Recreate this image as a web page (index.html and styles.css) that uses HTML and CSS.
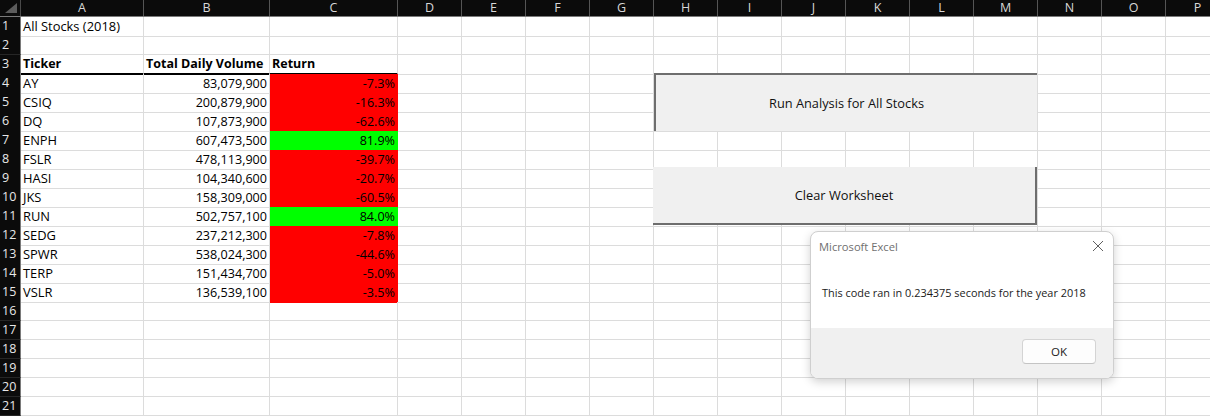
FILE: index.html
```html
<!DOCTYPE html>
<html>
<head>
<meta charset="utf-8">
<link rel="stylesheet" href="styles.css">
</head>
<body>
<div class="sheet">
  <div class="colhead">
    <div class="corner"><svg width="20" height="16" viewBox="0 0 20 16"><polygon points="17,3 17,13 5,13" fill="#5c5c5c"/></svg></div>
    <div class="ch">A</div><div class="ch">B</div><div class="ch">C</div><div class="ch">D</div><div class="ch">E</div><div class="ch">F</div><div class="ch">G</div><div class="ch">H</div><div class="ch">I</div><div class="ch">J</div><div class="ch">K</div><div class="ch">L</div><div class="ch">M</div><div class="ch">N</div><div class="ch">O</div><div class="ch">P</div>
  </div>
  <div class="row"><div class="rh">1</div><div class="cell">All Stocks (2018)</div><div class="cell"></div><div class="cell"></div><div class="rest"></div></div>
  <div class="row"><div class="rh">2</div><div class="cell"></div><div class="cell"></div><div class="cell"></div><div class="rest"></div></div>
  <div class="row head3"><div class="rh">3</div><div class="cell b">Ticker</div><div class="cell b">Total Daily Volume</div><div class="cell b">Return</div><div class="rest"></div></div>
  <div class="row"><div class="rh">4</div><div class="cell">AY</div><div class="cell num">83,079,900</div><div class="cell num neg">-7.3%</div><div class="rest"></div></div>
  <div class="row"><div class="rh">5</div><div class="cell">CSIQ</div><div class="cell num">200,879,900</div><div class="cell num neg">-16.3%</div><div class="rest"></div></div>
  <div class="row"><div class="rh">6</div><div class="cell">DQ</div><div class="cell num">107,873,900</div><div class="cell num neg">-62.6%</div><div class="rest"></div></div>
  <div class="row"><div class="rh">7</div><div class="cell">ENPH</div><div class="cell num">607,473,500</div><div class="cell num pos">81.9%</div><div class="rest"></div></div>
  <div class="row"><div class="rh">8</div><div class="cell">FSLR</div><div class="cell num">478,113,900</div><div class="cell num neg">-39.7%</div><div class="rest"></div></div>
  <div class="row"><div class="rh">9</div><div class="cell">HASI</div><div class="cell num">104,340,600</div><div class="cell num neg">-20.7%</div><div class="rest"></div></div>
  <div class="row"><div class="rh">10</div><div class="cell">JKS</div><div class="cell num">158,309,000</div><div class="cell num neg">-60.5%</div><div class="rest"></div></div>
  <div class="row"><div class="rh">11</div><div class="cell">RUN</div><div class="cell num">502,757,100</div><div class="cell num pos">84.0%</div><div class="rest"></div></div>
  <div class="row"><div class="rh">12</div><div class="cell">SEDG</div><div class="cell num">237,212,300</div><div class="cell num neg">-7.8%</div><div class="rest"></div></div>
  <div class="row"><div class="rh">13</div><div class="cell">SPWR</div><div class="cell num">538,024,300</div><div class="cell num neg">-44.6%</div><div class="rest"></div></div>
  <div class="row"><div class="rh">14</div><div class="cell">TERP</div><div class="cell num">151,434,700</div><div class="cell num neg">-5.0%</div><div class="rest"></div></div>
  <div class="row"><div class="rh">15</div><div class="cell">VSLR</div><div class="cell num">136,539,100</div><div class="cell num neg">-3.5%</div><div class="rest"></div></div>
  <div class="row"><div class="rh">16</div><div class="cell"></div><div class="cell"></div><div class="cell"></div><div class="rest"></div></div>
  <div class="row"><div class="rh">17</div><div class="cell"></div><div class="cell"></div><div class="cell"></div><div class="rest"></div></div>
  <div class="row"><div class="rh">18</div><div class="cell"></div><div class="cell"></div><div class="cell"></div><div class="rest"></div></div>
  <div class="row"><div class="rh">19</div><div class="cell"></div><div class="cell"></div><div class="cell"></div><div class="rest"></div></div>
  <div class="row"><div class="rh">20</div><div class="cell"></div><div class="cell"></div><div class="cell"></div><div class="rest"></div></div>
  <div class="row"><div class="rh">21</div><div class="cell"></div><div class="cell"></div><div class="cell"></div><div class="rest"></div></div>

  <div class="shape-btn btn-run">Run Analysis for All Stocks</div>
  <div class="shape-btn btn-clear">Clear Worksheet</div>

  <div class="dialog">
    <div class="dlg-title">
      <span class="dlg-name">Microsoft Excel</span>
      <svg class="dlg-close" width="12" height="12" viewBox="0 0 12 12"><path d="M1 1 L11 11 M11 1 L1 11" stroke="#5f5f5f" stroke-width="1" fill="none"/></svg>
    </div>
    <div class="dlg-body">This code ran in 0.234375 seconds for the year 2018</div>
    <div class="dlg-foot"><div class="dlg-ok">OK</div></div>
  </div>
</div>
</body>
</html>
```
FILE: styles.css
```css
html, body {
  margin: 0;
  padding: 0;
  background: #ffffff;
}
body {
  font-family: "Open Sans", "Liberation Sans", sans-serif;
  overflow: hidden;
  width: 1210px;
  height: 417px;
}
.sheet {
  position: relative;
  width: 1210px;
  height: 417px;
  overflow: hidden;
}
.colhead {
  display: grid;
  grid-template-columns: 21px 123px 126px 128px repeat(13, 64px);
  height: 17px;
  background: #0b0b0b;
  border-bottom: 1px solid #7a7a7a;
  box-sizing: border-box;
  width: 1230px;
}
.corner {
  border-right: 1px solid #4a4a4a;
  box-sizing: border-box;
}
.corner svg { display: block; }
.ch {
  color: #d8d8d8;
  font-size: 12.5px;
  line-height: 16px;
  text-align: center;
  border-right: 1px solid #555555;
  box-sizing: border-box;
}
.row {
  display: grid;
  grid-template-columns: 21px 123px 126px 128px 1fr;
  height: 19px;
}
.rh {
  background: #0b0b0b;
  color: #e8e8e8;
  font-size: 12.5px;
  line-height: 18px;
  padding-left: 2px;
  border-right: 1px solid #7a7a7a;
  border-bottom: 1px solid #262626;
  box-sizing: border-box;
}
.cell {
  border-right: 1px solid #dcdcdc;
  border-bottom: 1px solid #dcdcdc;
  box-sizing: border-box;
  font-size: 12.9px;
  line-height: 19px;
  color: #000;
  padding: 0 2px 0 2px;
  white-space: nowrap;
}
.rest {
  border-bottom: 1px solid #dcdcdc;
  box-sizing: border-box;
  background-image: repeating-linear-gradient(to right, transparent 0, transparent 63px, #dcdcdc 63px, #dcdcdc 64px);
}
.b { font-weight: bold; font-size: 12.5px; }
.head3 .cell { border-bottom: 2px solid #000; line-height: 18px; }
.num { text-align: right; font-size: 12.6px; }
.neg { background: #ff0000; border-color: #ff0000; padding-right: 2px; }
.pos { background: #00ff00; border-color: #00ff00; padding-right: 2px; }

.shape-btn {
  position: absolute;
  background: #f0f0f0;
  box-sizing: border-box;
  display: flex;
  align-items: center;
  justify-content: center;
  font-size: 12.8px;
  color: #111;
}
.btn-run {
  left: 654px;
  top: 73px;
  width: 383px;
  height: 58px;
  border-top: 2px solid #6e6e6e;
  border-left: 2px solid #6e6e6e;
}
.btn-clear {
  left: 653px;
  top: 167px;
  width: 384px;
  height: 58px;
  border-right: 2px solid #6e6e6e;
  border-bottom: 2px solid #6e6e6e;
}
.dialog {
  position: absolute;
  left: 810px;
  top: 231px;
  width: 304px;
  height: 148px;
  box-sizing: border-box;
  border: 1px solid #cfcfcf;
  border-radius: 8px;
  background: #ffffff;
  box-shadow: 0 3px 10px rgba(0,0,0,0.18);
  overflow: hidden;
  display: flex;
  flex-direction: column;
  font-family: "Open Sans", "Noto Sans", sans-serif;
}
.dlg-title {
  height: 28px;
  display: flex;
  align-items: center;
  justify-content: space-between;
  padding: 0 9px 0 8px;
}
.dlg-name {
  font-size: 11.2px;
  color: #6f6f6f;
}
.dlg-close { display: block; }
.dlg-body {
  flex: 1;
  display: flex;
  align-items: center;
  padding: 0 0 4px 11px;
  font-size: 10.9px;
  color: #1a1a1a;
}
.dlg-foot {
  height: 50px;
  background: #f0f0f0;
  display: flex;
  justify-content: flex-end;
  align-items: flex-start;
  padding: 11px 17px 0 0;
  box-sizing: border-box;
}
.dlg-ok {
  width: 74px;
  height: 25px;
  box-sizing: border-box;
  background: #fdfdfd;
  border: 1px solid #d4d4d4;
  border-bottom-color: #c4c4c4;
  border-radius: 4px;
  display: flex;
  align-items: center;
  justify-content: center;
  font-size: 11.5px;
  color: #1a1a1a;
}
```
